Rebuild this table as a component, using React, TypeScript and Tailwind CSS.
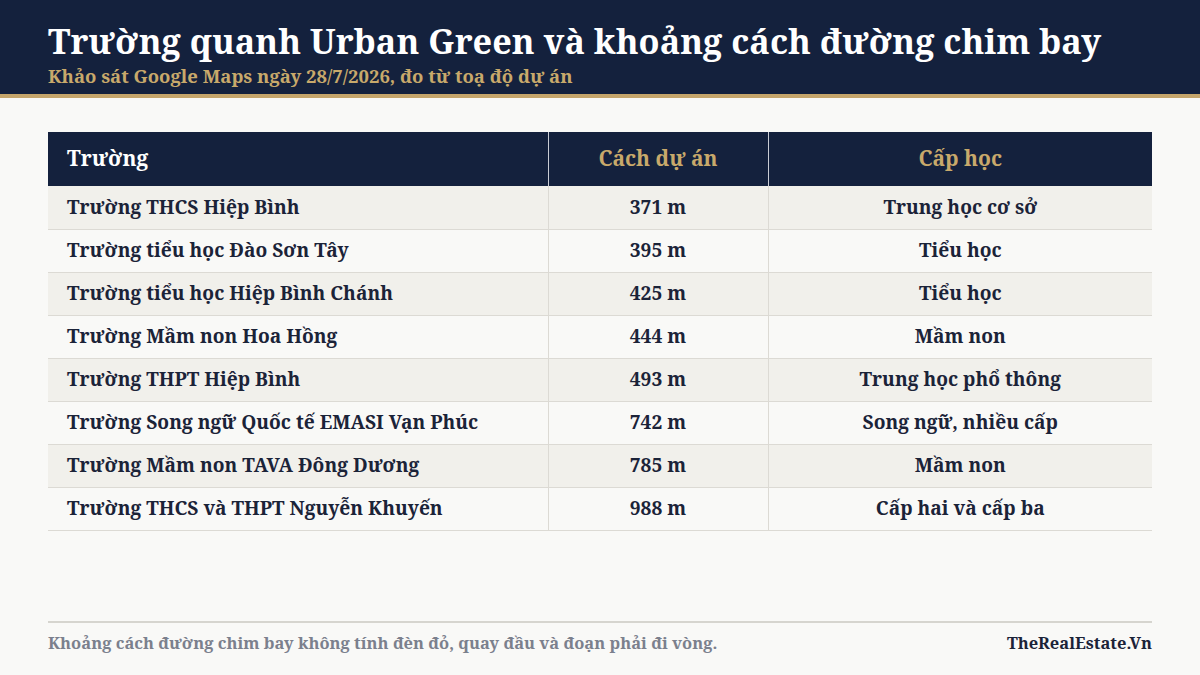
const rows = [
  ["Trường THCS Hiệp Bình", "371 m", "Trung học cơ sở"],
  ["Trường tiểu học Đào Sơn Tây", "395 m", "Tiểu học"],
  ["Trường tiểu học Hiệp Bình Chánh", "425 m", "Tiểu học"],
  ["Trường Mầm non Hoa Hồng", "444 m", "Mầm non"],
  ["Trường THPT Hiệp Bình", "493 m", "Trung học phổ thông"],
  ["Trường Song ngữ Quốc tế EMASI Vạn Phúc", "742 m", "Song ngữ, nhiều cấp"],
  ["Trường Mầm non TAVA Đông Dương", "785 m", "Mầm non"],
  ["Trường THCS và THPT Nguyễn Khuyến", "988 m", "Cấp hai và cấp ba"],
];

export default function App() {
  return (
    <div className="flex h-[675px] w-[1200px] flex-col overflow-hidden bg-[#f9f9f7] font-['Noto_Serif','DejaVu_Serif',serif]">
      <header className="border-b-4 border-[#c5a56b] bg-[#14213d] px-12 pb-[7px] pt-[21px]">
        <h1 className="whitespace-nowrap text-[34.3px] font-bold leading-[40px] text-white">Trường quanh Urban Green và khoảng cách đường chim bay</h1>
        <p className="mt-[4px] text-[18.5px] font-bold leading-[22px] text-[#c8a96b]">Khảo sát Google Maps ngày 28/7/2026, đo từ toạ độ dự án</p>
      </header>

      <main className="flex-1 px-12 pt-[34px]">
        <table className="w-full border-collapse text-[19.2px] font-bold text-[#1b2338]">
          <thead>
            <tr className="h-[54px] bg-[#14213d] text-[21px]">
              <th className="w-[500px] px-[19px] text-left text-white">Trường</th>
              <th className="w-[220px] border-l border-[#c9ccd4] text-center text-[#c8a96b]">Cách dự án</th>
              <th className="border-l border-[#c9ccd4] text-center text-[#c8a96b]">Cấp học</th>
            </tr>
          </thead>
          <tbody>
            {rows.map((row, index) => (
              <tr key={row[0]} className={`h-[43px] border-b border-[#dcdad4] ${index % 2 === 0 ? "bg-[#f1f0eb]" : "bg-[#f9f9f7]"}`}>
                <td className="px-[19px]">{row[0]}</td>
                <td className="border-l border-[#dcdad4] text-center">{row[1]}</td>
                <td className="border-l border-[#dcdad4] text-center">{row[2]}</td>
              </tr>
            ))}
          </tbody>
        </table>
      </main>

      <footer className="mx-12 mb-[20px] flex items-center justify-between border-t-2 border-[#d6d5cf] pt-[8px] text-[16.5px] font-bold leading-[24px]">
        <span className="text-[#7b808d]">Khoảng cách đường chim bay không tính đèn đỏ, quay đầu và đoạn phải đi vòng.</span>
        <span className="text-[#1b2338]">TheRealEstate.Vn</span>
      </footer>
    </div>
  );
}
